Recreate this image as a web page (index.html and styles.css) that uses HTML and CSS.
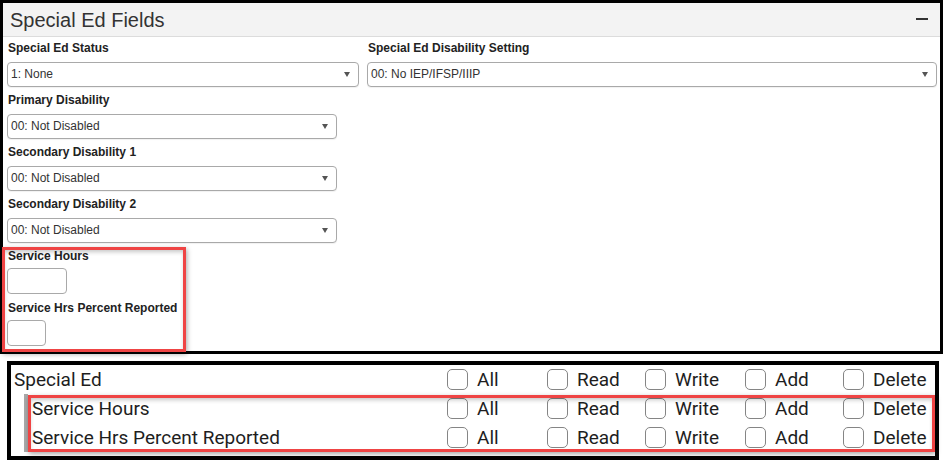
FILE: index.html
```html
<!DOCTYPE html>
<html>
<head>
<meta charset="utf-8">
<link rel="stylesheet" href="styles.css">
</head>
<body>
<div class="panel">
  <div class="head">
    <h2 class="title">Special Ed Fields</h2>
    <span class="minus"></span>
  </div>
  <div class="fields">
    <div class="pair">
      <div class="field f-status">
        <div class="lbl">Special Ed Status</div>
        <div class="select">1: None<span class="arrow"></span></div>
      </div>
      <div class="field f-grow">
        <div class="lbl">Special Ed Disability Setting</div>
        <div class="select">00: No IEP/IFSP/IIIP<span class="arrow"></span></div>
      </div>
    </div>
    <div class="field f-mid">
      <div class="lbl">Primary Disability</div>
      <div class="select">00: Not Disabled<span class="arrow"></span></div>
    </div>
    <div class="field f-mid">
      <div class="lbl">Secondary Disability 1</div>
      <div class="select">00: Not Disabled<span class="arrow"></span></div>
    </div>
    <div class="field f-mid">
      <div class="lbl">Secondary Disability 2</div>
      <div class="select">00: Not Disabled<span class="arrow"></span></div>
    </div>
    <div class="field f-input">
      <div class="lbl">Service Hours</div>
      <div class="input in-hours"></div>
    </div>
    <div class="field f-input">
      <div class="lbl">Service Hrs Percent Reported</div>
      <div class="input in-pct"></div>
    </div>
  </div>
</div>

<div class="perm">
  <div class="prow top">
    <div class="pname">Special Ed</div>
    <div class="cell"><span class="cb"></span>All</div>
    <div class="cell"><span class="cb"></span>Read</div>
    <div class="cell"><span class="cb"></span>Write</div>
    <div class="cell"><span class="cb"></span>Add</div>
    <div class="cell"><span class="cb"></span>Delete</div>
  </div>
  <div class="sub">
    <div class="prow">
      <div class="pname">Service Hours</div>
      <div class="cell"><span class="cb"></span>All</div>
      <div class="cell"><span class="cb"></span>Read</div>
      <div class="cell"><span class="cb"></span>Write</div>
      <div class="cell"><span class="cb"></span>Add</div>
      <div class="cell"><span class="cb"></span>Delete</div>
    </div>
    <div class="prow">
      <div class="pname">Service Hrs Percent Reported</div>
      <div class="cell"><span class="cb"></span>All</div>
      <div class="cell"><span class="cb"></span>Read</div>
      <div class="cell"><span class="cb"></span>Write</div>
      <div class="cell"><span class="cb"></span>Add</div>
      <div class="cell"><span class="cb"></span>Delete</div>
    </div>
  </div>
  <div class="prow top">
    <div class="pname"></div>
    <div class="cell"><span class="cb"></span></div>
    <div class="cell"><span class="cb"></span></div>
    <div class="cell"><span class="cb"></span></div>
    <div class="cell"><span class="cb"></span></div>
    <div class="cell"><span class="cb"></span></div>
  </div>
</div>

<div class="hl hl-top"></div>
<div class="hl hl-bottom"></div>
</body>
</html>
```

FILE: styles.css
```css
html, body {
  margin: 0;
  padding: 0;
  background: #ffffff;
}
body {
  position: relative;
  width: 943px;
  height: 460px;
  overflow: hidden;
}

/* ---------- top panel ---------- */
.panel {
  box-sizing: border-box;
  width: 943px;
  height: 354px;
  border: 3px solid #000;
  background: #fff;
  font-family: "Liberation Sans", Arial, sans-serif;
  color: #333;
}
.head {
  height: 33px;
  background: #f3f3f3;
  border-bottom: 1px solid #dcdcdc;
  display: flex;
  align-items: center;
  justify-content: space-between;
  padding: 0 12px 0 7px;
}
.title {
  margin: 0;
  font-size: 20px;
  font-weight: normal;
  color: #333;
  line-height: 24px;
}
.minus {
  width: 12px;
  height: 2px;
  background: #333;
  margin-top: -2px;
}
.fields {
  padding: 3px 3px 0 4px;
}
.pair {
  display: flex;
  gap: 8px;
}
.field {
  margin-bottom: 5px;
}
.lbl {
  font-size: 12px;
  font-weight: bold;
  line-height: 16px;
  color: #222;
  margin-bottom: 6px;
  padding-left: 1px;
}
.select {
  position: relative;
  box-sizing: border-box;
  height: 25px;
  border: 1px solid #a9a9a9;
  border-radius: 4px;
  background: #fff;
  font-size: 12px;
  line-height: 23px;
  padding-left: 3px;
  color: #333;
  box-shadow: 0 1px 1px rgba(0,0,0,0.06);
}
.arrow {
  position: absolute;
  right: 8px;
  top: 9px;
  width: 0;
  height: 0;
  border-left: 3px solid transparent;
  border-right: 3px solid transparent;
  border-top: 5px solid #555;
}
.f-status { width: 352px; }
.f-grow { flex: 1; }
.f-mid { width: 330px; }
.f-input .lbl { margin-bottom: 4px; }
.f-input { margin-bottom: 6px; }
.input {
  box-sizing: border-box;
  height: 26px;
  border: 1px solid #a9a9a9;
  border-radius: 4px;
  background: #fff;
}
.in-hours { width: 60px; }
.in-pct { width: 39px; }

/* ---------- permissions panel ---------- */
.perm {
  box-sizing: border-box;
  margin: 7px 0 0 7px;
  width: 932px;
  height: 99px;
  border: 4px solid #000;
  background: #fff;
  overflow: hidden;
  font-family: Roboto, "Liberation Sans", sans-serif;
  font-size: 19px;
  color: #1e1e1e;
}
.prow {
  display: grid;
  grid-template-columns: 436px 100px 98px 100px 98px 1fr;
  height: 29px;
  align-items: center;
}
.prow .pname {
  padding-left: 3px;
  white-space: nowrap;
}
.sub {
  margin-left: 13px;
  border-left: 4px solid #a9a9a9;
}
.sub .prow {
  grid-template-columns: 419px 100px 98px 100px 98px 1fr;
}
.sub .prow .pname {
  padding-left: 4px;
}
.cell {
  display: flex;
  align-items: center;
  white-space: nowrap;
}
.cb {
  box-sizing: border-box;
  width: 21px;
  height: 21px;
  border: 1.5px solid #858585;
  border-radius: 5px;
  background: #fff;
  margin-right: 9px;
  flex: none;
}

/* ---------- red annotation boxes ---------- */
.hl {
  position: absolute;
  box-sizing: border-box;
  border: 3px solid #ef4444;
  box-shadow: 1px 2px 5px rgba(0,0,0,0.35), inset 0 3px 4px -1px rgba(0,0,0,0.22);
  pointer-events: none;
}
.hl-top {
  left: 2px;
  top: 247px;
  width: 184px;
  height: 105px;
}
.hl-bottom {
  left: 28px;
  top: 395px;
  width: 907px;
  height: 57px;
}
```
